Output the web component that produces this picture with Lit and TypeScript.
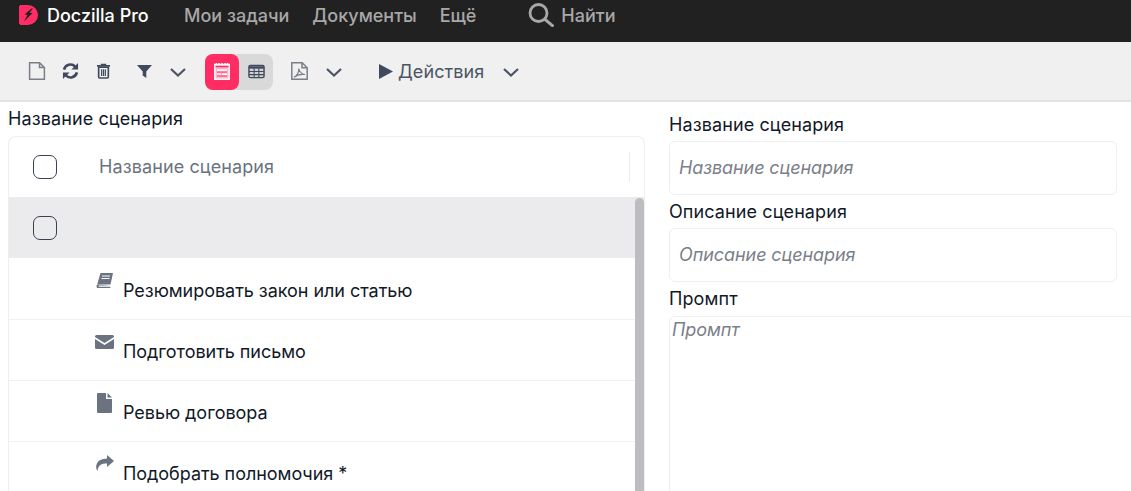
import { LitElement, html, css, svg } from "lit";
import { customElement } from "lit/decorators.js";

const chev = html`<svg class="chev" width="16" height="9" viewBox="0 0 16 9"><path d="M1 1 L8 7.500 L15 1" fill="none" stroke="#4b5563" stroke-width="2.200"/></svg>`;

@customElement("app-root")
export class AppRoot extends LitElement {
  static styles = css`
    :host { display: block; width: 1131px; height: 491px; overflow: hidden; background: #fff; font-family: Inter, "Noto Sans", sans-serif; color: #111827; }
    * { box-sizing: border-box; }
    .top { height: 42px; background: #212121; display: flex; align-items: center; padding: 0 0 12px 19px; font-size: 18px; font-weight: 500; color: #a8a8a8; }
    .brand { display: flex; align-items: center; gap: 9px; color: #fff; width: 165px; }
    .nav { margin-right: 23px; }
    .search { display: flex; align-items: center; gap: 7px; margin-left: 29px; }
    .bar { height: 60px; background: #f0f0f0; border-bottom: 2px solid #e2e2e2; display: flex; align-items: center; padding: 0 0 0 28px; color: #4b5563; }
    .bar svg { display: block; flex: none; }
    .chev { margin-top: 2px; }
    .m16 { margin-left: 16px; }
    .m18 { margin-left: 18px; }
    .m19 { margin-left: 19px; }
    .m27 { margin-left: 27px; }
    .m37 { margin-left: 37px; }
    .toggle { display: flex; width: 68px; height: 36px; background: #d9d9d9; border-radius: 8px; margin-left: 19px; margin-top: 2px; }
    .toggle div { width: 34px; height: 36px; display: flex; align-items: center; justify-content: center; border-radius: 8px; }
    .toggle svg { margin-top: -2px; }
    .toggle .on { background: #ff2d63; }
    .act { font-size: 18px; margin: 0 19px 0 5px; letter-spacing: 0.1px; }
    .main { display: flex; }
    .left { width: 645px; padding: 7px 0 0 8px; flex: none; }
    .lbl { font-size: 18px; line-height: 20px; letter-spacing: 0.1px; color: #111827; }
    .card { margin-top: 7px; border: 1px solid #eeeeee; border-bottom: none; border-radius: 8px 8px 0 0; position: relative; }
    .row { height: 61px; display: flex; align-items: center; border-bottom: 1px solid #f1f1f1; }
    .head { height: 60px; border-bottom: none; font-size: 18px; letter-spacing: 0.1px; color: #6b7280; }
    .head span { margin-top: -2px; }
    .sel { background: #ebebed; border-bottom: 1px solid #fff; height: 62px; }
    .check { width: 24px; height: 24px; border: 1.5px solid #374151; border-radius: 7px; margin-left: 24px; margin-right: 42px; flex: none; background: #fff; }
    .sel .check { background: transparent; }
    .head-sep { width: 1px; height: 30px; background: #eeeeee; margin-left: auto; margin-right: 14px; }
    .cell { display: flex; font-size: 18px; position: relative; height: 60px; align-items: flex-end; padding-bottom: 17px; width: 100%; }
    .cell svg { position: absolute; left: 86px; top: 12px; overflow: visible; }
    .cell span { margin-left: 114px; line-height: 22px; letter-spacing: -0.04px; }
    .scroll { position: absolute; right: 0; top: 61px; width: 9px; height: 400px; background: #bcbcc1; border-radius: 5px 5px 0 0; }
    .right { flex: 1; padding: 13px 0 0 24px; min-width: 0; }
    .input { height: 54px; width: 448px; border: 1px solid #efefef; border-radius: 6px; margin: 6px 0 7px; display: flex; align-items: center; padding: 0 0 2px 9px; font-size: 18px; letter-spacing: -0.1px; font-style: italic; color: #7b7f88; }
    .area { height: 200px; margin: 7px -30px 0 0; border: 1px solid #efefef; border-radius: 6px; padding: 3px 2px; font-size: 18px; letter-spacing: -0.1px; font-style: italic; color: #7b7f88; line-height: 20px; }
  `;

  render() {
    const rows = [
      ["Резюмировать закон или статью", svg`<path d="M5.500 2H18l-2.500 11.500H2.200Z" fill="#6b7280"/><path d="M2.200 13.500C1 15 1.300 17 3 17H15.200l.4-1.300H4.200c-1-.1-.9-1.100 0-1.200L15.500 14.500Z" fill="#6b7280"/><path d="M7 5h8M6.500 7.500h8" stroke="#fff" stroke-width="1"/>`],
      ["Подготовить письмо", svg`<path d="M1.500 3h16A1.500 1.500 0 0 1 19 4.500V5L9.500 11 0 5V4.500A1.500 1.500 0 0 1 1.500 3ZM0 7l9.500 6L19 7v8.500a1.500 1.500 0 0 1-1.500 1.500h-16A1.500 1.500 0 0 1 0 15.500Z" fill="#6b7280"/>`],
      ["Ревью договора", svg`<path d="M3 0h8v6h6v13a1 1 0 0 1-1 1H3a1 1 0 0 1-1-1V1a1 1 0 0 1 1-1ZM12.500 0 17 4.500h-4.500Z" fill="#6b7280"/>`],
      ["Подобрать полномочия *", svg`<path d="M12 1l7 6-7 6V9.500C6 9.500 3.500 11 2.500 17 0 13 .5 5 12 4.500Z" fill="#6b7280"/>`],
    ];
    return html`
      <div class="top">
        <div class="brand">
          <svg width="19" height="20" viewBox="0 0 19 20"><path d="M0 1h1V0h8a10 10 0 0 1 0 20H1v-1H0Z" fill="#ff2d63"/><path d="M12.500 3.500 5.500 9.500l3 .2-3.500 6.800 8.500-8.500-3-.2 3.500-4.300Z" fill="#212121"/></svg>
          Doczilla Pro
        </div>
        <span class="nav">Мои задачи</span><span class="nav">Документы</span><span class="nav">Ещё</span>
        <div class="search">
          <svg width="26" height="24" viewBox="0 0 26 24"><circle cx="10.500" cy="10" r="8.500" fill="none" stroke="#a8a8a8" stroke-width="2.800"/><path d="M16.500 16 25.500 23.500" stroke="#a8a8a8" stroke-width="3"/></svg>
          <span>Найти</span>
        </div>
      </div>
      <div class="bar">
        <svg width="18" height="18" viewBox="0 0 18 18"><path d="M1.600.8h10l4.800 4.800v11.600H1.600ZM11.500.8v4.800h4.900" fill="none" stroke="#7a7f88" stroke-width="1.500"/></svg>
        <svg class="m16" width="17" height="18" viewBox="0 0 18 18"><path d="M2.200 7.500A7 7 0 0 1 14 4.300M15.800 10.500A7 7 0 0 1 4 13.700" fill="none" stroke="#414a5c" stroke-width="2.800"/><path d="M17 .5v7h-7ZM1 17.500v-7h7Z" fill="#414a5c"/></svg>
        <svg class="m18" width="13" height="16" viewBox="0 0 14 16"><path d="M0 2.500h14M5 2.500V1h4v1.500" fill="none" stroke="#414a5c" stroke-width="1.800"/><path d="M1.800 4h10.400v10.500a1 1 0 0 1-1 1H2.800a1 1 0 0 1-1-1Z" fill="none" stroke="#414a5c" stroke-width="1.800"/><path d="M5 6v7.500M7 6v7.500M9 6v7.500" stroke="#414a5c" stroke-width="1.300"/></svg>
        <svg class="m27" width="15" height="13" viewBox="0 0 15 13"><path d="M0 0h15L9.300 6.500V13L5.700 10.500V6.500Z" fill="#414a5c"/></svg>
        <div class="m18">${chev}</div>
        <div class="toggle">
          <div class="on"><svg width="16" height="17" viewBox="0 0 16 17"><rect x=".8" y="1.500" width="14.400" height="14.700" fill="#ffb3c6" stroke="#fff" stroke-width="1.500"/><path d="M2.500 0v3.500M5 0v3.500M8 0v3.500M11 0v3.500M13.500 0v3.500" stroke="#fff" stroke-width="1.400"/><path d="M1.500 3.500h13" stroke="#ff2d63" stroke-width="1.500"/><path d="M3 6.500h10v1.500H3ZM8 10.500h5v1.500H8ZM3 10.500h4v1H3Z" fill="#fff"/><path d="M3 9.100h10M3 13h10" stroke="#ff2d63" stroke-width=".9"/></svg></div>
          <div><svg width="17" height="15" viewBox="0 0 18 15"><rect x="1" y="1" width="16" height="13" rx="1.500" fill="#d0d1d6" stroke="#414a5c" stroke-width="1.500"/><path d="M1 3.200h16" stroke="#414a5c" stroke-width="2.600"/><path d="M1 7.500h16M1 10.800h16M6.500 4v10M11.500 4v10" stroke="#414a5c" stroke-width="1.100"/></svg></div>
        </div>
        <svg class="m18" width="17" height="18" viewBox="0 0 17 18"><path d="M.8.800h10.400l5 5v11.400H.8ZM11 .8v5h5.200" fill="none" stroke="#7a7f88" stroke-width="1.500"/><path d="M3 15.300C6 13.500 8 9.800 7.800 6.500 8.500 10 10.800 12 14 12.500 10.500 12 6 12.800 3 15.300Z" fill="none" stroke="#7a7f88" stroke-width="1.200"/></svg>
        <div class="m18">${chev}</div>
        <svg class="m37" width="14" height="15" viewBox="0 0 14 15"><path d="M0 0 14 7.500 0 15Z" fill="#414a5c"/></svg>
        <span class="act">Действия</span>
        ${chev}
      </div>
      <div class="main">
        <div class="left">
          <div class="lbl">Название сценария</div>
          <div class="card">
            <div class="row head"><div class="check"></div><span>Название сценария</span><div class="head-sep"></div></div>
            <div class="row sel"><div class="check"></div></div>
            ${rows.map(([t, ic]) => html`<div class="row"><div class="cell"><svg width="20" height="20" viewBox="0 0 20 20">${ic}</svg><span>${t}</span></div></div>`)}
            <div class="scroll"></div>
          </div>
        </div>
        <div class="right">
          <div class="lbl">Название сценария</div>
          <div class="input">Название сценария</div>
          <div class="lbl">Описание сценария</div>
          <div class="input">Описание сценария</div>
          <div class="lbl">Промпт</div>
          <div class="area">Промпт</div>
        </div>
      </div>
    `;
  }
}
